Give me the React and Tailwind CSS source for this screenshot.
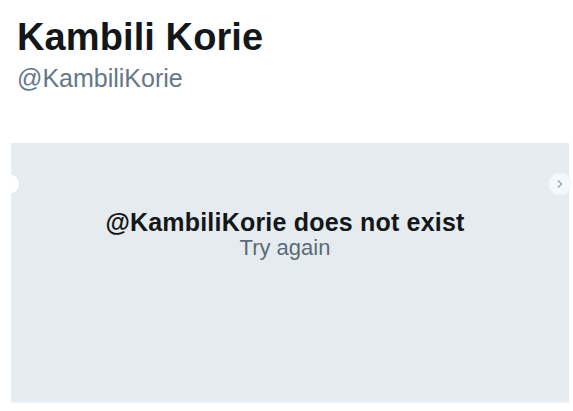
import React from "react";

const App = () => {
  return (
    <div
      className="w-[573px] h-[411px] bg-white overflow-hidden relative"
      style={{ fontFamily: '"Liberation Sans", Arial, sans-serif' }}
    >
      {/* Profile header */}
      <div className="pl-[17px] pt-[15px]">
        <h1 className="text-[38px] leading-[44px] font-bold text-[#14171a] tracking-[0.1px]">
          Kambili Korie
        </h1>
        <p className="text-[25px] leading-[30px] text-[#657786] mt-[4px]">@KambiliKorie</p>
      </div>

      {/* Media panel */}
      <div className="relative ml-[11px] mr-[4px] mt-[50px] h-[260px] bg-[#e5ebee] border-b-2 border-[#eef2f4]">
        <div className="flex flex-col items-center pt-[65px] pr-[10px]">
          <p className="text-[25px] leading-[28px] font-bold text-[#14171a] tracking-[0.2px]">
            @KambiliKorie does not exist
          </p>
          <p className="text-[22px] leading-[24px] text-[#5b6b78]">Try again</p>
        </div>

        {/* carousel arrows */}
        <div className="absolute left-[-12px] top-[31px] w-[20px] h-[20px] rounded-full bg-white" />
        <div className="absolute right-[-2px] top-[30px] w-[22px] h-[22px] rounded-full bg-[#f5f8fa] flex items-center justify-center">
          <svg width="8" height="10" viewBox="0 0 8 10">
            <path d="M2 1.5 L5.5 5 L2 8.5" fill="none" stroke="#9aa5ad" strokeWidth="1.4" />
          </svg>
        </div>
      </div>
    </div>
  );
};

export default App;
